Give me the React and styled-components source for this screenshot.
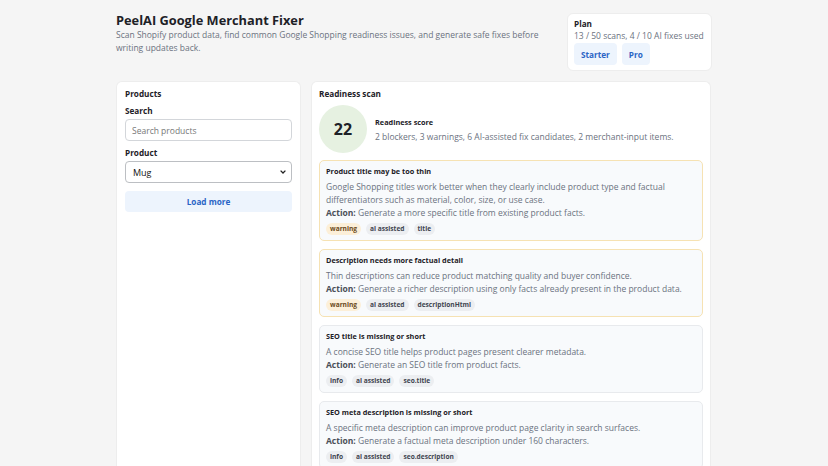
import React from 'react';
import styled, { createGlobalStyle } from 'styled-components';

const Global = createGlobalStyle`
  body {
    margin: 0;
    background: #f5f5f5;
    font-family: "Open Sans", "Noto Sans", sans-serif;
    color: #1d2127;
  }
`

const Page = styled.div`
  width: 596px;
  margin: 0 auto;
  padding-top: 13px;
`

const Header = styled.div`
  display: flex;
  justify-content: space-between;
  align-items: flex-start;
`

const Intro = styled.div`
  width: 436px;
`

const Title = styled.h1`
  margin: 0;
  font-size: 12.8px;
  line-height: 15px;
  font-weight: 700;
`

const Lead = styled.p`
  margin: 0;
  font-size: 8.5px;
  line-height: 13px;
  color: #6b7280;
`

const Card = styled.div`
  background: #fff;
  border: 1px solid #ededed;
  border-radius: 6px;
`

const PlanCard = styled(Card)`
  width: 145px;
  box-sizing: border-box;
  padding: 4px 6px 5px;
`

const Label = styled.div`
  font-size: 8.2px;
  line-height: ${p => p.$lh || 13}px;
  font-weight: 700;
  margin-top: ${p => p.$mt || 0}px;
`

const Muted = styled.div`
  font-size: 8.5px;
  line-height: 12px;
  color: #6b7280;
  white-space: nowrap;
`

const Buttons = styled.div`
  display: flex;
  gap: 5px;
  margin-top: 1px;
`

const SoftButton = styled.button`
  border: 0;
  border-radius: 4px;
  background: #edf4fd;
  color: #2a64c5;
  font-family: inherit;
  font-weight: 700;
  font-size: 8.2px;
  height: ${p => p.$full ? 21 : 22}px;
  padding: 0 7px;
  width: ${p => p.$full ? '100%' : 'auto'};
  margin-top: ${p => p.$full ? 8 : 0}px;
`

const Main = styled.div`
  display: grid;
  grid-template-columns: 185px 400px;
  gap: 10px;
  margin-top: 10px;
`

const Panel = styled(Card)`
  min-height: 400px;
  padding: 5px ${p => p.$px}px;
  border-bottom: 0;
  border-bottom-left-radius: 0;
  border-bottom-right-radius: 0;
`

const Control = `
  box-sizing: border-box;
  display: block;
  height: 22px;
  width: 100%;
  border-radius: 4px;
  font-family: inherit;
  background-color: #fff;
`

const Input = styled.input`
  ${Control}
  margin-top: 2px;
  border: 1px solid #d3d6da;
  padding: 0 6px;
  font-size: 8.5px;
  &::placeholder { color: #777; }
`

const chevron = "data:image/svg+xml,%3Csvg xmlns='http://www.w3.org/2000/svg' width='6' height='4' viewBox='0 0 6 4'%3E%3Cpath d='M0.6 0.6 L3 3 L5.4 0.6' fill='none' stroke='%23222' stroke-width='1.3'/%3E%3C/svg%3E"

const Select = styled.select`
  ${Control}
  appearance: none;
  margin-top: 2px;
  border: 1px solid #bcbfc3;
  padding: 0 7px;
  font-size: 9px;
  color: #111;
  background-image: url("${chevron}");
  background-repeat: no-repeat;
  background-position: right 5px center;
`

const ScoreRow = styled.div`
  display: flex;
  align-items: center;
  gap: 8px;
  margin: 5px 0 7px;
`

const Score = styled.div`
  flex: none;
  width: 48px;
  height: 48px;
  border-radius: 50%;
  background: #e6f1e1;
  display: flex;
  align-items: center;
  justify-content: center;
  font-size: 16px;
  font-weight: 700;
`

const SmallTitle = styled.div`
  font-size: 7.3px;
  line-height: 12px;
  font-weight: 700;
  margin-bottom: ${p => p.$mb ?? 3}px;
`

const Body = styled.div`
  font-size: 8.5px;
  line-height: 13px;
  color: #6b7280;
  b { color: #4b5058; }
`

const Issues = styled.div`
  display: flex;
  flex-direction: column;
  gap: 8px;
`

const Issue = styled.div`
  border: 1px solid ${p => p.$tone === 'warning' ? '#f6e2b3' : '#e8eaed'};
  border-radius: 5px;
  background: #f8fafc;
  padding: 4px 6px 5px;
`

const Tags = styled.div`
  display: flex;
  gap: 5px;
  margin-top: 4px;
`

const Tag = styled.span`
  font-size: 6.6px;
  line-height: 12px;
  font-weight: 700;
  padding: 0 4px;
  border-radius: 6px;
  background: ${p => p.$tone === 'warning' ? '#fcefd8' : '#eceef1'};
  color: ${p => p.$tone === 'warning' ? '#6b4a1a' : '#3f4550'};
`

const issues = [
  {
    title: 'Product title may be too thin',
    text: 'Google Shopping titles work better when they clearly include product type and factual differentiators such as material, color, size, or use case.',
    action: 'Generate a more specific title from existing product facts.',
    tags: ['warning', 'ai assisted', 'title'],
  },
  {
    title: 'Description needs more factual detail',
    text: 'Thin descriptions can reduce product matching quality and buyer confidence.',
    action: 'Generate a richer description using only facts already present in the product data.',
    tags: ['warning', 'ai assisted', 'descriptionHtml'],
  },
  {
    title: 'SEO title is missing or short',
    text: 'A concise SEO title helps product pages present clearer metadata.',
    action: 'Generate an SEO title from product facts.',
    tags: ['info', 'ai assisted', 'seo.title'],
  },
  {
    title: 'SEO meta description is missing or short',
    text: 'A specific meta description can improve product page clarity in search surfaces.',
    action: 'Generate a factual meta description under 160 characters.',
    tags: ['info', 'ai assisted', 'seo.description'],
  },
]

export default function App() {
  return (
    <Page>
      <Global />
      <Header>
        <Intro>
          <Title>PeelAI Google Merchant Fixer</Title>
          <Lead>Scan Shopify product data, find common Google Shopping readiness issues, and generate safe fixes before writing updates back.</Lead>
        </Intro>
        <PlanCard>
          <Label $lh={12}>Plan</Label>
          <Muted>13 / 50 scans, 4 / 10 AI fixes used</Muted>
          <Buttons>
            <SoftButton>Starter</SoftButton>
            <SoftButton>Pro</SoftButton>
          </Buttons>
        </PlanCard>
      </Header>
      <Main>
        <Panel $px={8}>
          <Label>Products</Label>
          <Label $mt={4}>Search</Label>
          <Input placeholder="Search products" />
          <Label $mt={5}>Product</Label>
          <Select defaultValue="mug">
            <option value="mug">Mug</option>
          </Select>
          <SoftButton $full>Load more</SoftButton>
        </Panel>
        <Panel $px={7}>
          <Label>Readiness scan</Label>
          <ScoreRow>
            <Score>22</Score>
            <div>
              <SmallTitle $mb={2}>Readiness score</SmallTitle>
              <Body>2 blockers, 3 warnings, 6 AI-assisted fix candidates, 2 merchant-input items.</Body>
            </div>
          </ScoreRow>
          <Issues>
            {issues.map(i => (
              <Issue key={i.title} $tone={i.tags[0]}>
                <SmallTitle>{i.title}</SmallTitle>
                <Body>{i.text}</Body>
                <Body><b>Action:</b> {i.action}</Body>
                <Tags>
                  {i.tags.map(t => <Tag key={t} $tone={t}>{t}</Tag>)}
                </Tags>
              </Issue>
            ))}
          </Issues>
        </Panel>
      </Main>
    </Page>
  );
}
